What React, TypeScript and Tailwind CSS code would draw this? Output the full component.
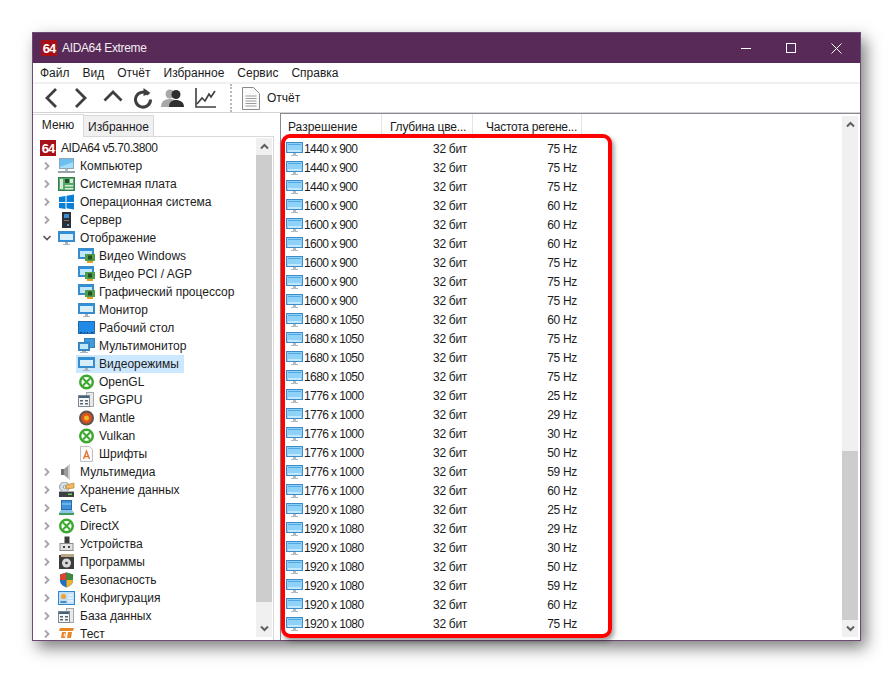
import React from 'react';

const FONT = "font-['Liberation_Sans',Arial,sans-serif]";

function Logo64({ size = 16 }: { size?: number }) {
    return (
        <div
            className="flex items-center justify-center bg-[#a80f17] text-white font-bold font-['Liberation_Sans',sans-serif] text-[13px] leading-none tracking-[-1px] shrink-0"
            style={{ width: size, height: size }}
        >
            64
        </div>
    );
}

function Svg({ children }: { children: React.ReactNode }) {
    return (
        <svg width="17" height="16" viewBox="0 0 17 16" className="shrink-0">
            {children}
        </svg>
    );
}

// blue monitor of the list rows
function ListMonitorIcon() {
    return (
        <Svg>
            <rect x="0.500" y="1.500" width="16" height="10" fill="#8fd2f7" stroke="#3d8cc8" />
            <path d="M2 3h13v1H2z" fill="#4fa8e4" />
            <path d="M2 9h13v2H2z" fill="#c4e8fb" />
            <path d="M7 12h3v2H7zM5 14h7v1H5z" fill="#b4bcc2" />
        </Svg>
    );
}

function ComputerIcon() {
    return (
        <Svg>
            <rect x="1.500" y="0.500" width="14" height="10" fill="#a5dcf8" stroke="#8ba7b8" />
            <path d="M2 1h13v3L2 9z" fill="#6cc0f0" />
            <path d="M7 11h3v2H7z" fill="#b4bcc2" />
            <path d="M0 13h17v2H0z" fill="#9aa2a8" />
        </Svg>
    );
}

function MonitorIcon() {
    return (
        <Svg>
            <rect x="0.500" y="1.500" width="16" height="10" fill="#2f8fd8" stroke="#3f8ac4" />
            <rect x="2" y="4" width="13" height="6" fill="#d8effb" />
            <path d="M7 12h3v2H7zM5 14h7v1H5z" fill="#a9b4bd" />
        </Svg>
    );
}

function MonitorCardIcon() {
    return (
        <Svg>
            <rect x="0.500" y="0.500" width="15" height="10" fill="#2f8fd8" stroke="#3f8ac4" />
            <rect x="2" y="3" width="12" height="6" fill="#bfe6fb" />
            <rect x="7" y="6" width="10" height="7" fill="#4f9d4a" />
            <rect x="10" y="7.500" width="4" height="4" fill="#234f22" />
            <path d="M9 13h6v2H9z" fill="#e8a020" />
        </Svg>
    );
}

function DesktopIcon() {
    return (
        <Svg>
            <rect x="0.500" y="1.500" width="16" height="12" fill="#1f8ae8" stroke="#2468a8" />
            <path d="M2 12h2v1H2zM6 12h1v1H6zM9 12h1v1H9zM13 12h2v1h-2z" fill="#0b3c70" />
        </Svg>
    );
}

function MultiMonitorIcon() {
    return (
        <Svg>
            <rect x="6.500" y="0.500" width="10" height="9" fill="#3f9be0" stroke="#3f7fb0" />
            <rect x="0.500" y="4.500" width="11" height="8" fill="#2f8fd8" stroke="#3f7fb0" />
            <rect x="2" y="6" width="8" height="5" fill="#bfe6fb" />
            <path d="M4 13h4v1H4zM2 14h8v1H2z" fill="#a9b4bd" />
        </Svg>
    );
}

function XboxIcon() {
    return (
        <Svg>
            <circle cx="8.500" cy="8" r="6.300" fill="#fff" stroke="#3aa82c" strokeWidth="2.400" />
            <path d="M5 4.500l7 7M12 4.500l-7 7" stroke="#3aa82c" strokeWidth="2" />
        </Svg>
    );
}

function GpgpuIcon() {
    return (
        <Svg>
            <rect x="8.500" y="0.500" width="7" height="14" fill="#e9e9e9" stroke="#a6a6a6" />
            <rect x="0.500" y="3.500" width="11" height="11" fill="#f6f6f6" stroke="#7c8794" />
            <rect x="1" y="4" width="10" height="2" fill="#45617c" />
            <path d="M2 8h3v1.500H2zM7 8h3v1.500H7zM2 11h3v1.500H2zM7 11h3v1.500H7z" fill="#5c6670" />
        </Svg>
    );
}

function MantleIcon() {
    return (
        <Svg>
            <circle cx="8.500" cy="8" r="7.500" fill="#5a5450" />
            <circle cx="8.500" cy="8" r="5.500" fill="#d9521c" />
            <circle cx="8.500" cy="8" r="2.500" fill="#f2b32e" />
        </Svg>
    );
}

function FontIcon() {
    return (
        <Svg>
            <path d="M2.500 0.500h9l3 3v12h-12z" fill="#fafafa" stroke="#c0c0c0" />
            <path d="M5.500 13l3-8 3 8M6.700 10.500h3.600" fill="none" stroke="#e0702a" strokeWidth="1.300" />
        </Svg>
    );
}

function SpeakerIcon() {
    return (
        <Svg>
            <path d="M3 5h3v6H3z" fill="#6f6f6f" />
            <path d="M6 5l6-5v16l-6-5z" fill="#9a9a9a" />
            <path d="M10 1.700L12 0v16l-2-1.700z" fill="#d2d2d2" />
        </Svg>
    );
}

function StorageIcon() {
    return (
        <Svg>
            <circle cx="6.500" cy="5" r="5" fill="#d5e0e6" stroke="#8fa0aa" />
            <circle cx="6.500" cy="5" r="1.300" fill="#fff" stroke="#8fa0aa" />
            <path d="M8 3l8-2v5l-8 1z" fill="#f0b860" stroke="#b8863a" strokeWidth="0.700" />
            <rect x="1" y="10" width="15" height="5" fill="#3d4144" />
            <rect x="1" y="9" width="15" height="1" fill="#a9aeb2" />
            <rect x="10" y="11.500" width="4" height="1.500" fill="#6bd060" />
        </Svg>
    );
}

function NetworkIcon() {
    return (
        <Svg>
            <rect x="3.500" y="0.500" width="10" height="9" fill="#3d94dc" stroke="#2d6da5" />
            <path d="M4 4h9" stroke="#9fd2f4" />
            <path d="M3 10h11l2 3H1z" fill="#8cc3e8" />
            <path d="M1 13h15v2H1z" fill="#3f9c5a" />
        </Svg>
    );
}

function DevicesIcon() {
    return (
        <Svg>
            <rect x="6.500" y="0.500" width="5" height="7" fill="#3a3a3a" />
            <rect x="2" y="7.500" width="13" height="7" fill="#e2e2e2" stroke="#8a8a8a" />
            <path d="M5 10h2v2H5zM10 10h2v2h-2z" fill="#444" />
        </Svg>
    );
}

function ProgramsIcon() {
    return (
        <Svg>
            <rect x="1" y="1" width="15" height="14" fill="#3c3c3c" />
            <rect x="3" y="0" width="13" height="3" fill="#b8a888" />
            <circle cx="8.500" cy="9" r="4.500" fill="#d8d8d8" />
            <circle cx="8.500" cy="9" r="1.300" fill="#333" />
        </Svg>
    );
}

function ShieldIcon() {
    return (
        <Svg>
            <path d="M8.500 0.500L15 2.500v6c0 3.500-3 5.700-6.500 7C5 14.200 2 12 2 8.500v-6z" fill="#1f6fc4" />
            <path d="M8.500 0.500L2 2.500V8h6.500z" fill="#d8452c" />
            <path d="M8.500 8H15c0 3.500-3 6.200-6.500 7.500z" fill="#f0b429" />
            <path d="M8.500 0.500L15 2.500V8H8.500z" fill="#3f8a3a" />
        </Svg>
    );
}

function ConfigIcon() {
    return (
        <Svg>
            <rect x="0.500" y="1.500" width="16" height="13" fill="#bfe0f7" stroke="#2f86cc" />
            <circle cx="5.500" cy="6.500" r="2.500" fill="#f0a030" />
            <path d="M2.500 12h6" stroke="#2c6aa0" strokeWidth="1.500" />
            <path d="M10 5h5M10 8h5M10 11h5" stroke="#fff" />
        </Svg>
    );
}

function TestIcon() {
    return (
        <Svg>
            <path d="M2 2h14l-1 3H1z" fill="#e8862a" />
            <path d="M4 6h4l-1 6H3zM10 6h4l-1 6H9z" fill="#e8862a" />
            <path d="M6 7.500h1l-.3 3h-1z" fill="#fff" />
        </Svg>
    );
}

function WindowsIcon() {
    return (
        <Svg>
            <path d="M1 3l6.500-1v6H1zM8.500 1.800L16 0.500V8H8.500zM1 9h6.500v6L1 14zM8.500 9H16v6.500l-7.500-1.200z" fill="#0a7fd6" />
        </Svg>
    );
}

function ServerIcon() {
    return (
        <Svg>
            <rect x="4" y="0" width="9" height="16" fill="#2b3036" />
            <rect x="6" y="2" width="5" height="4" fill="#3f8fd0" />
            <rect x="6" y="8" width="5" height="1" fill="#777" />
            <rect x="9" y="12" width="2" height="2" fill="#5aa0d8" />
        </Svg>
    );
}

function BoardIcon() {
    return (
        <Svg>
            <rect x="0.500" y="1.500" width="16" height="13" fill="#55a868" stroke="#3c7a50" />
            <rect x="2" y="3" width="3" height="10" fill="#d6ecd6" />
            <rect x="7" y="3" width="4" height="4" fill="#264d32" />
            <rect x="12" y="3" width="3" height="4" fill="#d6ecd6" />
            <rect x="7" y="9" width="8" height="1.500" fill="#d6ecd6" />
            <rect x="7" y="12" width="8" height="1.500" fill="#d6ecd6" />
        </Svg>
    );
}

function Expander({ open }: { open?: boolean }) {
    return (
        <svg width="10" height="10" viewBox="0 0 10 10" className="shrink-0">
            {open
                ? <path d="M1.500 3l3.500 3.500L8.500 3" fill="none" stroke="#5a5a5a" strokeWidth="1.700" />
                : <path d="M3 1.500L6.500 5 3 8.500" fill="none" stroke="#a6a6a6" strokeWidth="1.900" />}
        </svg>
    );
}

function TopRow({ label, icon: Icon, open }: { label: string; icon: React.ComponentType; open?: boolean }) {
    return (
        <div className="flex h-[18px] items-center pl-[9px] shrink-0">
            <Expander open={open} />
            <div className="ml-[6px] flex"><Icon /></div>
            <span className="ml-[5px]">{label}</span>
        </div>
    );
}

function SubRow({ label, icon: Icon, selected }: { label: string; icon: React.ComponentType; selected?: boolean }) {
    return (
        <div className="flex h-[18px] items-center pl-[43px] shrink-0">
            <div className={`flex h-[18px] items-center pl-[2px] pr-[5px] ${selected ? 'bg-[#cce8ff]' : ''}`}>
                <Icon />
                <span className="ml-[4px]">{label}</span>
            </div>
        </div>
    );
}

function ScrollArrow({ up }: { up?: boolean }) {
    return (
        <div className="flex h-[17px] items-center justify-center bg-[#f0f0f0] shrink-0">
            <svg width="9" height="7" viewBox="0 0 9 7">
                <path d={up ? 'M1 5.500l3.500-3.500 3.500 3.500' : 'M1 1.500l3.500 3.500 3.500-3.500'} fill="none" stroke="#606060" strokeWidth="2" />
            </svg>
        </div>
    );
}

const rows: [string, number][] = [
    ['1440 x 900', 75], ['1440 x 900', 75], ['1440 x 900', 75],
    ['1600 x 900', 60], ['1600 x 900', 60], ['1600 x 900', 60],
    ['1600 x 900', 75], ['1600 x 900', 75], ['1600 x 900', 75],
    ['1680 x 1050', 60], ['1680 x 1050', 75], ['1680 x 1050', 75], ['1680 x 1050', 75],
    ['1776 x 1000', 25], ['1776 x 1000', 29], ['1776 x 1000', 30],
    ['1776 x 1000', 50], ['1776 x 1000', 59], ['1776 x 1000', 60],
    ['1920 x 1080', 25], ['1920 x 1080', 29], ['1920 x 1080', 30],
    ['1920 x 1080', 50], ['1920 x 1080', 59], ['1920 x 1080', 60], ['1920 x 1080', 75],
];

function Toolbar() {
    return (
        <div className="flex h-[28px] items-center bg-white border-b border-[#d4d4d4] shrink-0 box-content">
            <svg width="14" height="22" viewBox="0 0 14 22" className="ml-[11px] shrink-0">
                <path d="M12 2L3 11l9 9" fill="none" stroke="#3f3f3f" strokeWidth="2.800" />
            </svg>
            <svg width="14" height="22" viewBox="0 0 14 22" className="ml-[16px] shrink-0">
                <path d="M2 2l9 9-9 9" fill="none" stroke="#3f3f3f" strokeWidth="2.800" />
            </svg>
            <svg width="20" height="13" viewBox="0 0 20 13" className="ml-[15px] mb-[5px] shrink-0">
                <path d="M1.500 11.500L10 3l8.500 8.500" fill="none" stroke="#3f3f3f" strokeWidth="2.800" />
            </svg>
            <svg width="20" height="22" viewBox="0 0 20 22" className="ml-[10px] shrink-0">
                <path d="M15.500 7.500a7.500 7.500 0 1 0 2 5" fill="none" stroke="#3f3f3f" strokeWidth="3" />
                <path d="M10.500 1l7 5-7 3z" fill="#3f3f3f" />
            </svg>
            <svg width="24" height="20" viewBox="0 0 24 20" className="ml-[8px] shrink-0">
                <circle cx="9" cy="6" r="4.500" fill="#a8a8a8" />
                <path d="M0 19c0-6 4-8 9-8s8 2 8 8z" fill="#a8a8a8" />
                <circle cx="15" cy="6.500" r="4.500" fill="#2f2f2f" />
                <path d="M8 19c0-5 3-7 7-7s8 2 8 7z" fill="#2f2f2f" />
            </svg>
            <svg width="21" height="22" viewBox="0 0 21 22" className="ml-[10px] shrink-0">
                <path d="M1 1v19h20" fill="none" stroke="#3f3f3f" strokeWidth="1.600" />
                <path d="M2 17l5-6 3 3 4-7 2 3 4-6" fill="none" stroke="#3f3f3f" strokeWidth="1.600" />
            </svg>
            <div className="ml-[14px] h-full border-l-2 border-dotted border-[#b8b8b8]" />
            <svg width="18" height="23" viewBox="0 0 18 23" className="ml-[10px] shrink-0">
                <path d="M0.500 0.500h11l6 6v16h-17z" fill="#fbfbfb" stroke="#8a8a8a" />
                <path d="M3.500 9h11M3.500 11.500h11M3.500 14h11M3.500 16.500h11M3.500 19h11" stroke="#9c9c9c" />
            </svg>
            <span className="ml-[7px] text-[#1a1a1a]">Отчёт</span>
        </div>
    );
}

function Tree() {
    return (
        <div className="flex flex-col flex-1 min-w-0 overflow-hidden pt-[2px]">
            <div className="flex h-[18px] items-center pl-[7px] shrink-0">
                <Logo64 />
                <span className="ml-[5px] tracking-[-0.45px]">AIDA64 v5.70.3800</span>
            </div>
            <TopRow label="Компьютер" icon={ComputerIcon} />
            <TopRow label="Системная плата" icon={BoardIcon} />
            <TopRow label="Операционная система" icon={WindowsIcon} />
            <TopRow label="Сервер" icon={ServerIcon} />
            <TopRow label="Отображение" icon={MonitorIcon} open />
            <SubRow label="Видео Windows" icon={MonitorCardIcon} />
            <SubRow label="Видео PCI / AGP" icon={MonitorCardIcon} />
            <SubRow label="Графический процессор" icon={MonitorCardIcon} />
            <SubRow label="Монитор" icon={MonitorIcon} />
            <SubRow label="Рабочий стол" icon={DesktopIcon} />
            <SubRow label="Мультимонитор" icon={MultiMonitorIcon} />
            <SubRow label="Видеорежимы" icon={MonitorIcon} selected />
            <SubRow label="OpenGL" icon={XboxIcon} />
            <SubRow label="GPGPU" icon={GpgpuIcon} />
            <SubRow label="Mantle" icon={MantleIcon} />
            <SubRow label="Vulkan" icon={XboxIcon} />
            <SubRow label="Шрифты" icon={FontIcon} />
            <TopRow label="Мультимедиа" icon={SpeakerIcon} />
            <TopRow label="Хранение данных" icon={StorageIcon} />
            <TopRow label="Сеть" icon={NetworkIcon} />
            <TopRow label="DirectX" icon={XboxIcon} />
            <TopRow label="Устройства" icon={DevicesIcon} />
            <TopRow label="Программы" icon={ProgramsIcon} />
            <TopRow label="Безопасность" icon={ShieldIcon} />
            <TopRow label="Конфигурация" icon={ConfigIcon} />
            <TopRow label="База данных" icon={GpgpuIcon} />
            <TopRow label="Тест" icon={TestIcon} />
        </div>
    );
}

export default function App() {
    return (
        <div className={`w-[893px] h-[673px] bg-white pt-[32px] pl-[32px] overflow-hidden text-[12px] leading-none text-[#1c1c1c] ${FONT}`}>
            <div className="relative flex flex-col w-[829px] h-[609px] border border-[#6d4a72] bg-white shadow-[5px_7px_15px_rgba(0,0,0,0.5)]">
                {/* Title bar */}
                <div className="flex h-[30px] items-center bg-[#582a58] pl-[8px] shrink-0">
                    <Logo64 />
                    <span className="ml-[5px] tracking-[-0.35px] text-[#f2eef2]">AIDA64 Extreme</span>
                    <div className="ml-auto flex items-center pr-[18px] gap-[35px]">
                        <div className="w-[10px] h-[1px] bg-white" />
                        <div className="w-[10px] h-[10px] border border-white" />
                        <svg width="11" height="11" viewBox="0 0 11 11">
                            <path d="M0.500 0.500l10 10M10.500 0.500l-10 10" stroke="#fff" />
                        </svg>
                    </div>
                </div>

                {/* Menu */}
                <div className="flex h-[19px] items-center gap-[13px] pl-[7px] border-b-2 border-[#f0f0f0] box-content shrink-0">
                    <span>Файл</span>
                    <span>Вид</span>
                    <span>Отчёт</span>
                    <span>Избранное</span>
                    <span>Сервис</span>
                    <span>Справка</span>
                </div>

                <Toolbar />

                <div className="flex flex-1 min-h-0">
                    {/* Left panel */}
                    <div className="flex flex-col w-[241px] shrink-0">
                        <div className="flex h-[23px] items-end shrink-0">
                            <div className="flex h-[23px] w-[51px] items-center justify-center border-t border-r border-[#d9d9d9] bg-white pb-[3px] -mb-px relative z-10">Меню</div>
                            <div className="flex h-[21px] w-[70px] items-center justify-center border-t border-r border-[#d9d9d9] bg-[#f0f0f0] pt-[1px]">Избранное</div>
                        </div>
                        <div className="flex flex-1 min-h-0 border-t border-r border-[#d9d9d9]">
                            <Tree />
                            <div className="flex flex-col w-[16px] mr-[1px] mb-[3px] mt-[1px] shrink-0 bg-[#f0f0f0]">
                                <ScrollArrow up />
                                <div className="h-[447px] bg-[#cdcdcd]" />
                                <div className="flex-1" />
                                <ScrollArrow />
                            </div>
                        </div>
                    </div>

                    {/* Right panel */}
                    <div className="flex flex-1 min-w-0 ml-[6px] border-l border-t border-[#8d8794]">
                        <div className="flex flex-col flex-1 min-w-0 overflow-hidden">
                            <div className="flex h-[25px] items-center shrink-0">
                                <div className="flex h-full w-[101px] items-center pl-[7px] border-r border-[#e5e5e5]">Разрешение</div>
                                <div className="flex h-full w-[91px] items-center pl-[8px] tracking-[-0.2px] border-r border-[#e5e5e5]">Глубина цве...</div>
                                <div className="flex h-full w-[109px] items-center justify-end pr-[4px] tracking-[-0.25px] border-r border-[#e5e5e5]">Частота регене...</div>
                            </div>
                            {rows.map(([res, hz], i) => (
                                <div key={i} className="flex h-[19px] items-center shrink-0">
                                    <div className="flex w-[101px] items-center pl-[5px]">
                                        <ListMonitorIcon />
                                        <span className="ml-[1px] tracking-[-0.6px]">{res}</span>
                                    </div>
                                    <div className="w-[91px] text-right pr-[6px] tracking-[-0.3px]">32 бит</div>
                                    <div className="w-[109px] text-right pr-[5px] tracking-[-0.3px]">{hz} Hz</div>
                                </div>
                            ))}
                        </div>
                        <div className="flex flex-col w-[16px] mr-[2px] mt-[2px] mb-[3px] shrink-0 bg-[#f0f0f0]">
                            <ScrollArrow up />
                            <div className="flex-1" />
                            <div className="h-[169px] bg-[#cdcdcd]" />
                            <ScrollArrow />
                        </div>
                    </div>
                </div>

                {/* Red annotation frame */}
                <div className="absolute left-[248px] top-[101px] w-[331px] h-[504px] rounded-[9px] border-[4px] border-[#ff0000] shadow-[2px_3px_5px_rgba(0,0,0,0.4)] pointer-events-none" />
            </div>
        </div>
    );
}
